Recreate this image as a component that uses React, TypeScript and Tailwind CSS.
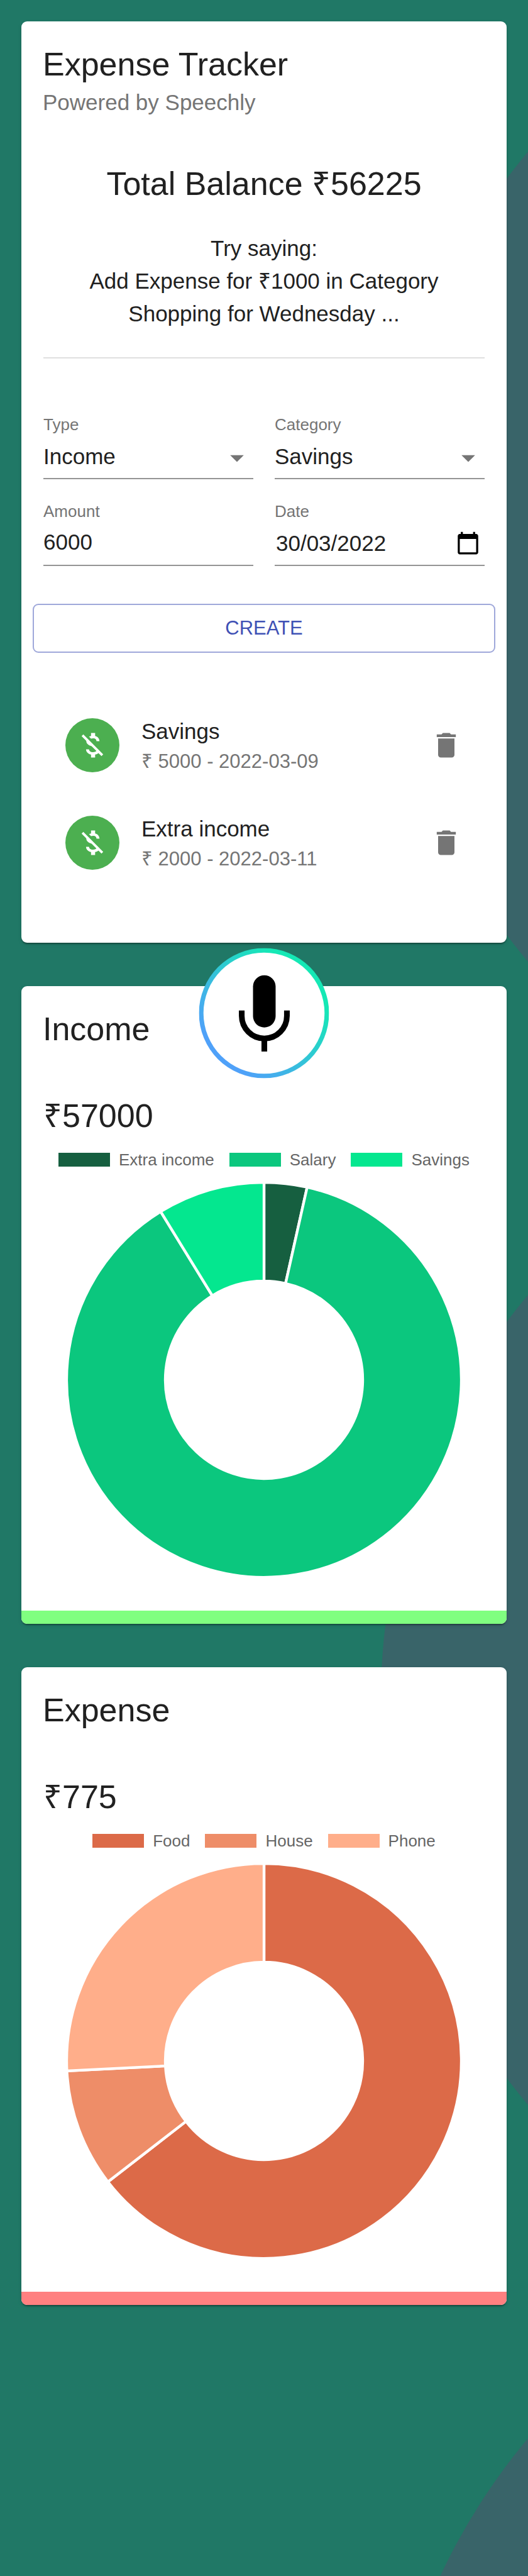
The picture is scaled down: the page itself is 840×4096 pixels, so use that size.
import React, { useState } from "react";

type Slice = { label: string; value: number; color: string };

const income: Slice[] = [
  { label: "Extra income", value: 2000, color: "#165f40" },
  { label: "Salary", value: 50000, color: "#0bc77e" },
  { label: "Savings", value: 5000, color: "#04e78f" },
];

const expense: Slice[] = [
  { label: "Food", value: 500, color: "#dc6a48" },
  { label: "House", value: 75, color: "#ee8d68" },
  { label: "Phone", value: 200, color: "#ffae8a" },
];

const transactions = [
  { id: 1, category: "Savings", detail: "₹ 5000 - 2022-03-09" },
  { id: 2, category: "Extra income", detail: "₹ 2000 - 2022-03-11" },
];

const cardClass =
  "overflow-hidden rounded-[9px] bg-white shadow-[0_4px_2px_-2px_rgba(0,0,0,0.2),0_2px_2px_0_rgba(0,0,0,0.14),0_2px_6px_0_rgba(0,0,0,0.12)]";
const headingClass = "text-[52px] leading-[69px]";
const labelClass = "block text-[26px] leading-[26px] text-[#757575]";
const fieldClass =
  "block h-[74px] w-full appearance-none rounded-none border-b-2 border-[#949494] bg-transparent text-[35px] leading-[42px] text-[#212121] outline-none";

function slicePath(from: number, to: number) {
  const outer = 437;
  const inner = 218.5;
  const at = (r: number, t: number) =>
    `${(437 + r * Math.sin(t * 2 * Math.PI)).toFixed(2)} ${(437 - r * Math.cos(t * 2 * Math.PI)).toFixed(2)}`;
  const large = to - from > 0.5 ? 1 : 0;
  return `M${at(outer, from)} A${outer} ${outer} 0 ${large} 1 ${at(outer, to)} L${at(inner, to)} A${inner} ${inner} 0 ${large} 0 ${at(inner, from)} Z`;
}

function Doughnut({ slices, title }: { slices: Slice[]; title: string }) {
  const total = slices.reduce((sum, s) => sum + s.value, 0);
  let start = 0;
  return (
    <svg viewBox="0 0 874 874" role="img" aria-label={`${title} chart`} className="mx-auto mt-[22px] block w-[628px] max-w-full">
      {slices.map((s) => {
        const from = start;
        start += s.value / total;
        return <path key={s.label} d={slicePath(from, start)} fill={s.color} stroke="#fff" strokeWidth="6" />;
      })}
    </svg>
  );
}

function SummaryCard({ title, total, slices, barClass }: { title: string; total: string; slices: Slice[]; barClass: string }) {
  return (
    <section className={cardClass}>
      <header className="p-[34px]">
        <h2 className={headingClass}>{title}</h2>
      </header>
      <div className="px-[35px] pt-[35px] pb-[53px]">
        <p className={headingClass}>{total}</p>
        <ul className="mt-[21px] flex justify-center gap-6">
          {slices.map((s) => (
            <li key={s.label} className="flex items-center gap-[14px] text-[26px] leading-7 text-[#666666]">
              <span className="h-[22px] w-[82px]" style={{ backgroundColor: s.color }} />
              {s.label}
            </li>
          ))}
        </ul>
        <Doughnut slices={slices} title={title} />
      </div>
      <div className={barClass} />
    </section>
  );
}

function SelectField({ id, label, options }: { id: string; label: string; options: string[] }) {
  return (
    <div>
      <label htmlFor={id} className={labelClass}>{label}</label>
      <div className="relative">
        <select id={id} className={`${fieldClass} pt-1`}>
          {options.map((o) => (
            <option key={o}>{o}</option>
          ))}
        </select>
        <svg viewBox="0 0 24 24" className="pointer-events-none absolute top-[14px] right-0 size-[52px] fill-[#757575]">
          <path d="M7 10l5 5 5-5z" />
        </svg>
      </div>
    </div>
  );
}

function MicButton() {
  return (
    <button
      type="button"
      aria-label="Hold to talk"
      className="absolute top-1/2 left-1/2 z-10 size-[207px] -translate-x-1/2 -translate-y-1/2 rounded-full"
    >
      <svg viewBox="0 0 288 288" className="size-full">
        <defs>
          <linearGradient id="ring" x1="0.19" y1="0.81" x2="0.77" y2="0.23">
            <stop offset="0" stopColor="#4fa1f9" />
            <stop offset="1" stopColor="#15e8b5" />
          </linearGradient>
        </defs>
        <circle cx="144" cy="144" r="144" fill="url(#ring)" />
        <circle cx="144" cy="144" r="134" fill="#fff" />
        <rect x="119.7" y="60" width="50" height="115.5" rx="25" />
        <path d="M94.7 138v12a50 50 0 0 0 100 0v-12" fill="none" stroke="#000" strokeWidth="12.6" />
        <path d="M138.4 200h12.6v28.7h-12.6z" />
      </svg>
    </button>
  );
}

export default function App() {
  const [amount, setAmount] = useState("6000");
  const [date, setDate] = useState("30/03/2022");

  return (
    <main
      className="relative isolate min-h-screen overflow-hidden bg-[#207866] p-[34px] text-[#212121]"
      style={{ fontFamily: '"Liberation Sans", Arial, sans-serif' }}
    >
      <svg viewBox="0 0 1170 5706" preserveAspectRatio="xMaxYMin slice" className="absolute inset-0 -z-10 size-full fill-[#396469]">
        <circle cx="2241" cy="1233" r="1397" />
        <circle cx="2241" cy="3765" r="1397" />
        <circle cx="2241" cy="6297" r="1397" />
      </svg>

      <section className={cardClass}>
        <header className="p-[34px]">
          <h1 className={headingClass}>Expense Tracker</h1>
          <p className="text-[35px] leading-[52px] text-[#757575]">Powered by Speechly</p>
        </header>
        <div className="px-[35px] pt-[35px] pb-[82px]">
          <h2 className={`${headingClass} text-center`}>Total Balance ₹56225</h2>
          <p className="mt-[42px] text-center text-[35px] leading-[52px]">
            Try saying:
            <br />
            Add Expense for ₹1000 in Category
            <br />
            Shopping for Wednesday ...
          </p>
          <hr className="mt-[43px] border-t-2 border-[#e0e0e0]" />

          <form className="mt-[92px]" onSubmit={(e) => e.preventDefault()}>
            <div className="grid grid-cols-2 gap-x-[34px] gap-y-[38px]">
              <SelectField id="type" label="Type" options={["Income", "Expense"]} />
              <SelectField id="category" label="Category" options={["Savings", "Salary", "Extra income"]} />
              <div>
                <label htmlFor="amount" className={labelClass}>Amount</label>
                <input id="amount" inputMode="numeric" value={amount} onChange={(e) => setAmount(e.target.value)} className={fieldClass} />
              </div>
              <div>
                <label htmlFor="date" className={labelClass}>Date</label>
                <div className="relative">
                  <input id="date" value={date} onChange={(e) => setDate(e.target.value)} className={`${fieldClass} pt-1 pl-[2px]`} />
                  <button type="button" aria-label="Open calendar" className="absolute top-[18px] right-[7px] size-[39px]">
                    <svg viewBox="0 0 24 24" className="size-full">
                      <path d="M20 3h-1V1h-2v2H7V1H5v2H4c-1.1 0-2 .9-2 2v16c0 1.1.9 2 2 2h16c1.1 0 2-.9 2-2V5c0-1.1-.9-2-2-2zm0 18H4V8h16v13z" />
                    </svg>
                  </button>
                </div>
              </div>
            </div>
            <div className="-mx-[17px] mt-[60px]">
              <button
                type="submit"
                className="block h-[78px] w-full rounded-[9px] border-2 border-[#9fa8da] text-[31px] leading-[52px] text-[#3f51b5]"
              >
                CREATE
              </button>
            </div>
          </form>

          <ul className="mt-[69px] flex flex-col px-[35px]">
            {transactions.map((t) => (
              <li key={t.id} className="flex h-[155px] items-center">
                <span className="flex size-[86px] shrink-0 items-center justify-center rounded-full bg-[#4caf50]">
                  <svg viewBox="0 0 24 24" className="size-[52px] fill-white">
                    <path d="M12.5 6.9c1.78 0 2.44.85 2.5 2.1h2.21c-.07-1.72-1.12-3.3-3.21-3.81V3h-3v2.16c-.53.12-1.03.3-1.48.54l1.47 1.47c.41-.17.91-.27 1.51-.27zM5.33 4.06L4.06 5.33 7.5 8.77c0 2.08 1.56 3.21 3.91 3.91l3.51 3.51c-.34.48-1.05.91-2.42.91-2.06 0-2.87-.92-2.98-2.1h-2.2c.12 2.19 1.76 3.42 3.68 3.83V21h3v-2.15c.96-.18 1.82-.55 2.45-1.12l2.22 2.22 1.27-1.27L5.33 4.06z" />
                  </svg>
                </span>
                <div className="ml-[35px] grow">
                  <p className="text-[35px] leading-[52px]">{t.category}</p>
                  <p className="text-[31px] leading-[43px] text-[#757575]">{t.detail}</p>
                </div>
                <button type="button" aria-label={`Delete ${t.category}`}>
                  <svg viewBox="0 0 24 24" className="size-[52px] fill-[#757575]">
                    <path d="M6 19c0 1.1.9 2 2 2h8c1.1 0 2-.9 2-2V7H6v12zM19 4h-3.5l-1-1h-5l-1 1H5v2h14V4z" />
                  </svg>
                </button>
              </li>
            ))}
          </ul>
        </div>
      </section>

      <div className="relative h-[69px]">
        <div className="absolute inset-x-0 bottom-0 translate-y-[43px]">
          <MicButton />
        </div>
      </div>
      <SummaryCard title="Income" total="₹57000" slices={income} barClass="h-[21px] bg-[#80ff80]" />
      <div className="h-[69px]" />
      <SummaryCard title="Expense" total="₹775" slices={expense} barClass="h-[21px] bg-[#ff8080]" />
    </main>
  );
}
